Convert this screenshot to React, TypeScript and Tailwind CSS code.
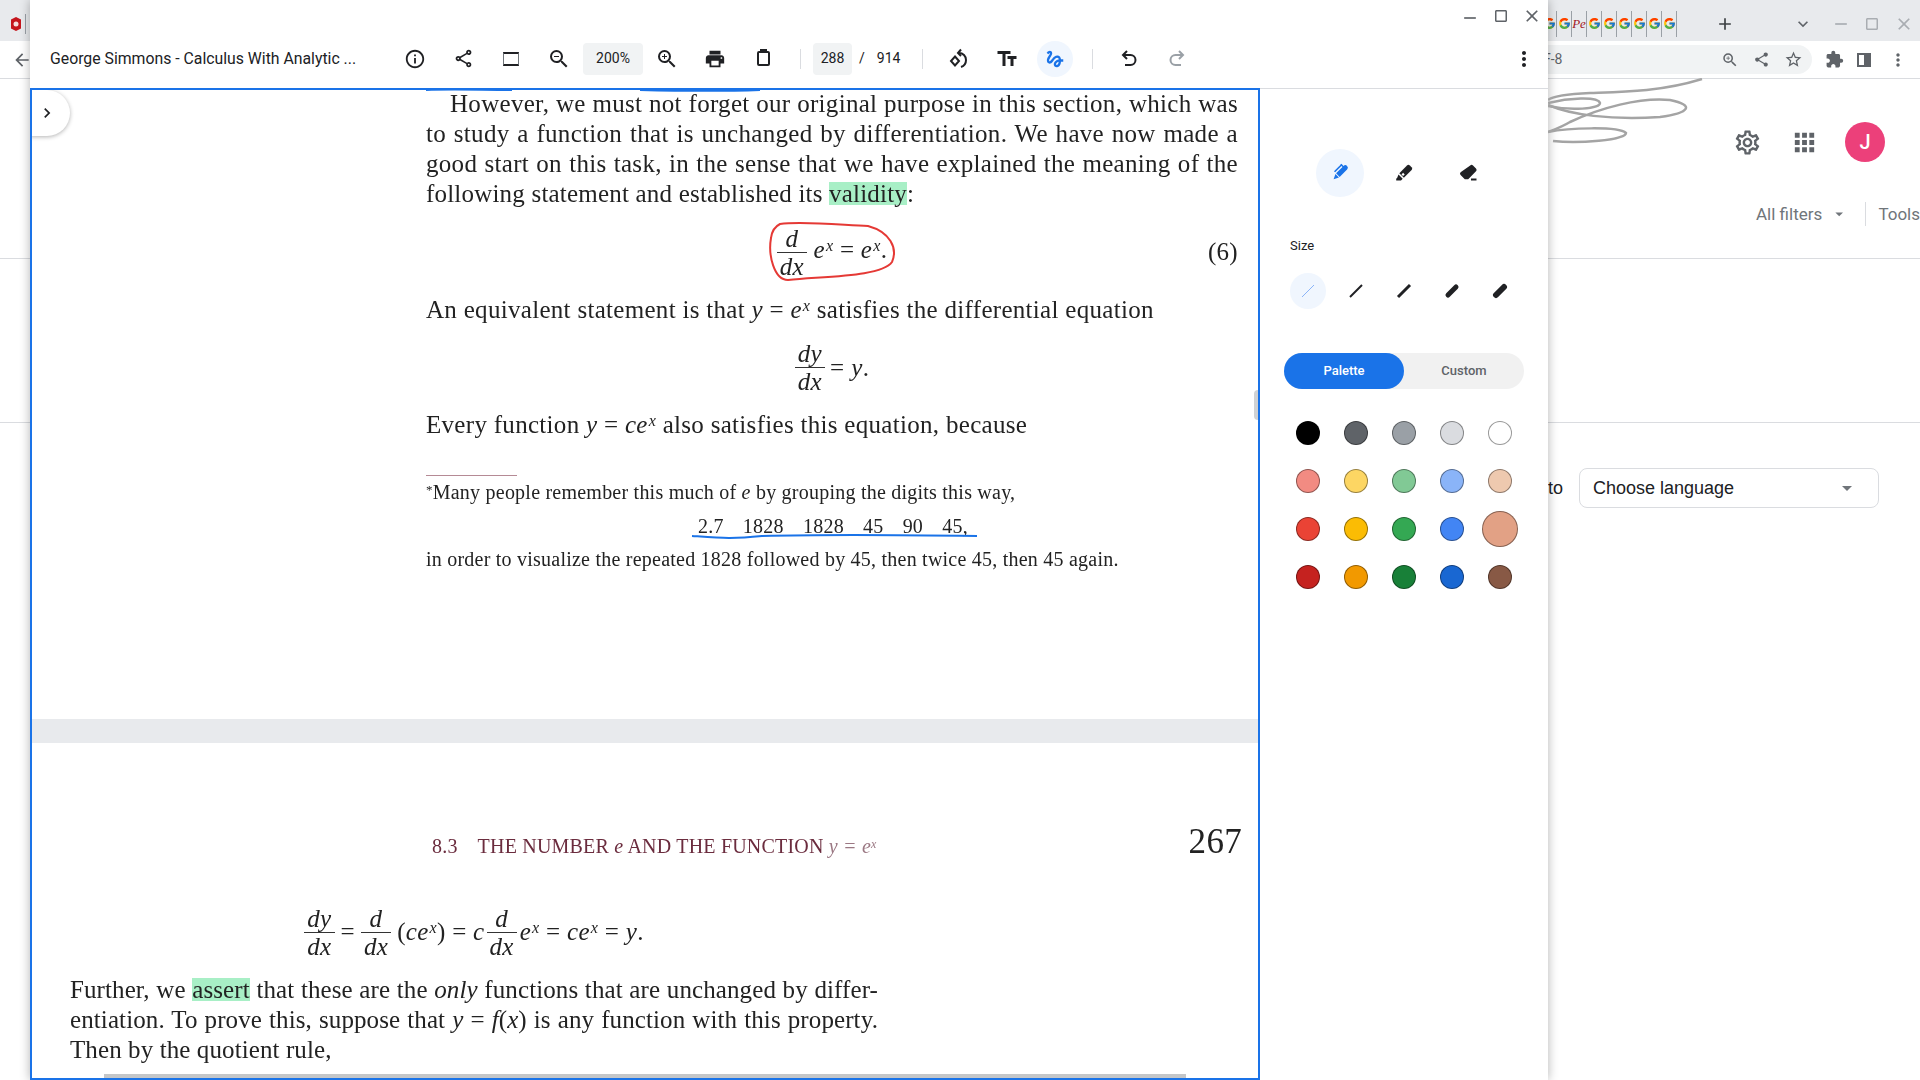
import type { ReactNode } from 'react';
import { FcGoogle } from 'react-icons/fc';
import {
    MdAdd, MdApps, MdArrowBack, MdArrowDropDown, MdChevronRight, MdClose, MdCropSquare, MdExpandMore, MdExtension,
    MdGesture, MdInfoOutline, MdMoreVert, MdOutlineSettings, MdOutlineShare, MdPrint, MdRemove, MdShare,
    MdStarBorder, MdTextFields, MdZoomIn, MdZoomOut,
} from 'react-icons/md';

const palette = [
    '#000000', '#5f6368', '#9aa0a6', '#dadce0', '#ffffff',
    '#f28b82', '#fdd663', '#81c995', '#8ab4f8', '#eec9af',
    '#ea4335', '#fbbc04', '#34a853', '#4285f4', '#e2a185',
    '#c5221f', '#f29900', '#188038', '#1967d2', '#885945',
];
const sizes = [1, 2, 3, 5, 6];

const ToolButton = ({ children, className = '' }: { children: ReactNode; className?: string }) => (
    <div className={`flex h-12 w-12 shrink-0 items-center justify-center ${className}`}>{children}</div>
);

const Divider = () => <div className="h-5 w-px shrink-0 bg-[#dadce0]" />;

// one justified line of the scanned page
const Line = ({ children, className = '' }: { children: ReactNode; className?: string }) => (
    <div className={`[text-align-last:justify] ${className}`}>{children}</div>
);

const Frac = ({ top, bottom }: { top: string; bottom: string }) => (
    <span className="inline-flex flex-col items-center align-middle italic leading-[27px]">
        <span className="w-full border-b border-[#333] px-[3px] text-center">{top}</span>
        <span className="px-[3px]">{bottom}</span>
    </span>
);

const Ex = ({ base = 'e' }: { base?: string }) => (
    <i>{base}<sup className="top-[-7px] ml-[1px] text-[16px] leading-none">x</sup></i>
);

const Mark = ({ children }: { children: ReactNode }) => (
    <span className="inline-block h-[23px] bg-[#a8efc6] leading-[23px]">{children}</span>
);

const RotateIcon = () => (
    <svg width="24" height="24" viewBox="0 0 24 24" fill="none" stroke="#202124" strokeWidth="2">
        <path d="M8 9.500 12 14l-4 4.500L4 14z" />
        <path d="M12 6c4 0 7 3 7 7 0 3-2 6-5 7" />
        <path d="M14 2.500 11 6l3 3" />
    </svg>
);

const UndoIcon = ({ color, flip = false }: { color: string; flip?: boolean }) => (
    <svg width="24" height="24" viewBox="0 0 24 24" fill="none" stroke={color} strokeWidth="2" className={flip ? '-scale-x-100' : ''}>
        <path d="M10 4 6 8l4 4" />
        <path d="M6 8h7.500a5 5 0 0 1 0 10H8" />
    </svg>
);

const PenIcon = () => (
    <svg width="24" height="24" viewBox="0 0 24 24" fill="#1a73e8">
        <g transform="rotate(45 12 12)">
            <path d="M9.500 4.500a2.500 2.500 0 0 1 5 0V15h-5z" />
            <path d="M9.500 16h5L12 21z" />
            <path d="M6.500 5h1.600v10H6.500z" />
            <path d="M6.500 4.500h4V6h-4z" />
        </g>
    </svg>
);

const HighlighterIcon = () => (
    <svg width="24" height="24" viewBox="0 0 24 24" fill="#202124">
        <path d="M15 4.500a2 2 0 0 1 2.800 0l1.800 1.800a2 2 0 0 1 0 2.800l-7.700 7.700-4.600-4.600z" />
        <path d="M6.500 13.500l4.200 4.200-1.700 1.700H4.200v-1.600l1-1z" />
        <path fill="#fff" d="M9.500 13.400l1.600-1.600 1.600 1.600-1.600 1.600z" />
    </svg>
);

const EraserIcon = () => (
    <svg width="24" height="24" viewBox="0 0 24 24" fill="#202124">
        <path d="M14.200 4.500a2 2 0 0 1 2.800 0l3 3a2 2 0 0 1 0 2.800l-7.800 7.900H8.800L4.600 14a2 2 0 0 1 0-2.800z" />
        <path d="M15 17.500h5.500v2H15z" />
    </svg>
);

const App = () => {
    return (
        <div className="relative h-[1080px] w-[1920px] overflow-hidden bg-white font-['Roboto',sans-serif]">
            {/* browser window behind */}
            <div className="flex h-[41px] items-center bg-[#e8eaed] pt-[6px]">
                <svg width="16" height="16" viewBox="0 0 16 16" className="ml-[8px]">
                    <path d="M8 1l5 2.500V12.500L8 15l-5-2.500V3.500z" fill="#c5161d" />
                    <circle cx="8" cy="8" r="2.500" fill="#f5dede" />
                </svg>
                <div className="ml-[1px] h-[20px] w-px bg-[#9aa0a6]" />
                <div className="w-[1516px]" />
                {['g', 'g', 'p', 'g', 'g', 'g', 'g', 'g', 'g'].map((kind, i) => (
                    <div key={i} className="flex h-[26px] w-[15px] shrink-0 items-center justify-center border-r border-[#9aa0a6]">
                        {kind === 'g'
                            ? <FcGoogle className="h-[13px] w-[13px]" />
                            : <span className="font-['Liberation_Serif',serif] text-[13px] italic text-[#a3161d]">Pe</span>}
                    </div>
                ))}
                <MdAdd className="ml-[38px] h-[20px] w-[20px] text-[#3c4043]" />
                <MdExpandMore className="ml-[58px] h-[20px] w-[20px] text-[#5f6368]" />
                <MdRemove className="ml-[18px] h-[20px] w-[20px] text-[#a9adb2]" />
                <MdCropSquare className="ml-[12px] h-[18px] w-[18px] text-[#a9adb2]" />
                <MdClose className="ml-[13px] h-[20px] w-[20px] text-[#a9adb2]" />
            </div>
            <div className="flex h-[38px] items-center border-b border-[#dadce0] bg-white">
                <MdArrowBack className="ml-[12px] h-[20px] w-[20px] text-[#5f6368]" />
                <div className="ml-[1516px] flex h-[29px] w-[264px] items-center rounded-r-full bg-[#f1f3f4] text-[14px] text-[#5f6368]">
                    <span className="ml-[-5px]">F-8</span>
                    <MdZoomIn className="ml-[159px] h-[18px] w-[18px]" />
                    <MdShare className="ml-[14px] h-[17px] w-[17px]" />
                    <MdStarBorder className="ml-[14px] h-[19px] w-[19px]" />
                </div>
                <MdExtension className="ml-[13px] h-[19px] w-[19px] text-[#5f6368]" />
                <div className="ml-[13px] flex h-[14px] w-[14px] justify-end border-2 border-[#5f6368]"><div className="w-[5px] bg-[#5f6368]" /></div>
                <MdMoreVert className="ml-[17px] h-[20px] w-[20px] text-[#5f6368]" />
            </div>

            {/* google page behind the pdf window */}
            <div className="flex h-[120px] items-center justify-end pr-[35px] pt-[6px]">
                <MdOutlineSettings className="h-[29px] w-[29px] text-[#5f6368]" />
                <MdApps className="ml-[28px] h-[29px] w-[29px] text-[#5f6368]" />
                <div className="ml-[26px] flex h-10 w-10 items-center justify-center rounded-full bg-[#ec407a] text-[20px] font-medium text-[#fff]">J</div>
            </div>
            <div className="flex h-[60px] items-start whitespace-nowrap border-b border-[#dadce0] pl-[1756px] pt-px text-[17px] text-[#70757a]">
                <span className="leading-[28px]">All filters</span>
                <MdArrowDropDown className="ml-[8px] mt-[2px] h-[24px] w-[24px]" />
                <div className="ml-[16px] mt-[2px] h-[24px] w-px bg-[#dadce0]" />
                <span className="ml-[13px] leading-[28px]">Tools</span>
            </div>
            <div className="h-[164px] border-b border-[#dadce0]" />
            <div className="flex items-center pl-[1548px] pt-[45px] font-['Liberation_Sans',sans-serif] text-[#202124]">
                <span className="text-[18px]">to</span>
                <div className="ml-[16px] flex h-[40px] w-[300px] items-center justify-between rounded-lg border border-[#dadce0] pl-[13px] pr-[19px] text-[18px]">
                    Choose language
                    <MdArrowDropDown className="h-[24px] w-[24px] text-[#70757a]" />
                </div>
            </div>

            {/* pdf window */}
            <div className="absolute left-[30px] top-0 flex h-[1080px] w-[1518px] flex-col bg-white text-[#202124] shadow-[0_0_10px_rgba(0,0,0,0.3)]">
                <div className="flex h-[29px] items-center justify-end gap-[12px] pr-[6px] pt-[2px] text-[#5f6368]">
                    <MdRemove className="mt-[4px] h-[20px] w-[20px]" />
                    <MdCropSquare className="h-[18px] w-[18px]" />
                    <MdClose className="h-[20px] w-[20px]" />
                </div>
                <div className="flex h-[59px] items-center">
                    <div className="w-[361px] shrink-0 pl-[20px] text-[15.8px] leading-none">George Simmons - Calculus With Analytic ...</div>
                    <ToolButton><MdInfoOutline size={22} /></ToolButton>
                    <ToolButton><MdOutlineShare size={21} /></ToolButton>
                    <ToolButton>
                        <div className="h-[14px] w-[16px] border-x border-y-2 border-x-[#70757a] border-y-[#202124]" />
                    </ToolButton>
                    <ToolButton><MdZoomOut size={24} /></ToolButton>
                    <div className="flex h-8 w-[60px] shrink-0 items-center justify-center rounded bg-[#f1f3f4] text-[14px]">200%</div>
                    <ToolButton><MdZoomIn size={24} /></ToolButton>
                    <ToolButton><MdPrint size={22} /></ToolButton>
                    <ToolButton>
                        <div className="relative h-[15px] w-[13px] rounded-[2px] border-2 border-[#202124] before:absolute before:left-[1px] before:top-[-4px] before:h-[2px] before:w-[7px] before:bg-[#202124]" />
                    </ToolButton>
                    <div className="ml-[13px]"><Divider /></div>
                    <div className="ml-[12px] flex h-8 w-[39px] shrink-0 items-center justify-center rounded bg-[#f1f3f4] text-[14px]">288</div>
                    <span className="ml-[7px] text-[14px]">/</span>
                    <span className="ml-[12px] text-[14px]">914</span>
                    <div className="ml-[22px]"><Divider /></div>
                    <ToolButton className="ml-[12px]"><RotateIcon /></ToolButton>
                    <ToolButton><MdTextFields size={24} /></ToolButton>
                    <ToolButton>
                        <div className="flex h-9 w-9 items-center justify-center rounded-full bg-[#f0f6fe] text-[#1a73e8]"><MdGesture size={22} /></div>
                    </ToolButton>
                    <div className="ml-[13px]"><Divider /></div>
                    <ToolButton className="ml-[12px]"><UndoIcon color="#202124" /></ToolButton>
                    <ToolButton><UndoIcon color="#9aa0a6" flip /></ToolButton>
                    <ToolButton className="ml-auto"><MdMoreVert size={24} /></ToolButton>
                </div>

                <div className="flex min-h-0 flex-1">
                    {/* document */}
                    <div className="relative w-[1230px] shrink-0 overflow-hidden border-2 border-[#1a73e8] bg-white font-['Liberation_Serif',serif] text-[25px] leading-[30px] tracking-[0.3px] text-[#222]">
                        <div className="blur-[0.35px]">
                            <div className="flow-root h-[629px] pl-[394px] pr-[20px]">
                                <div className="mt-[-1px]">
                                    <Line className="pl-[24px]">However, we must not forget our original purpose in this section, which was</Line>
                                    <Line>to study a function that is unchanged by differentiation. We have now made a</Line>
                                    <Line>good start on this task, in the sense that we have explained the meaning of the</Line>
                                    <div className="tracking-[0.2px]">following statement and established its <Mark>validity</Mark>:</div>
                                </div>
                                <div className="grid h-[86px] grid-cols-[1fr_auto_1fr] items-center">
                                    <div />
                                    <div className="whitespace-nowrap"><Frac top="d" bottom="dx" /> <Ex /> = <Ex />.</div>
                                    <div className="text-right">(6)</div>
                                </div>
                                <div>An equivalent statement is that <i>y</i> = <Ex /> satisfies the differential equation</div>
                                <div className="flex h-[85px] items-center justify-center whitespace-nowrap">
                                    <Frac top="dy" bottom="dx" /><span className="ml-[5px]">=</span><i className="ml-[7px]">y</i>.
                                </div>
                                <div>Every function <i>y</i> = <Ex base="ce" /> also satisfies this equation, because</div>
                                <div className="mt-[35px] h-px w-[91px] bg-[#b58a95]" />
                                <div className="text-[20px] leading-[33.500px] tracking-[0.23px]">
                                    <div><sup className="top-[-5px] text-[13px] leading-none">*</sup>Many people remember this much of <i>e</i> by grouping the digits this way,</div>
                                    <div className="ml-[272px] flex w-[270px] justify-between">
                                        <span>2.7</span><span>1828</span><span>1828</span><span>45</span><span>90</span><span>45,</span>
                                    </div>
                                    <div>in order to visualize the repeated 1828 followed by 45, then twice 45, then 45 again.</div>
                                </div>
                            </div>
                            <div className="h-[24px] bg-[#e8eaed]" />
                            <div className="pl-[38px]">
                                <div className="flex w-[1172px] items-baseline pl-[362px] pt-[79px] text-[#6b2c3e]">
                                    <span className="text-[20px] tracking-[0.2px]">8.3</span>
                                    <span className="ml-[20px] text-[20px] tracking-[0.2px]">THE NUMBER <i>e</i> AND THE FUNCTION <i className="text-[#9b7883]">y = e<sup className="top-[-5px] text-[12px] leading-none">x</sup></i></span>
                                    <span className="ml-auto text-[35px] leading-[40px] text-[#222]">267</span>
                                </div>
                                <div className="mt-[24px] flex h-[80px] w-[808px] items-center justify-center whitespace-nowrap pt-[12px]">
                                    <Frac top="dy" bottom="dx" /><span className="mx-[6px]">=</span><Frac top="d" bottom="dx" />
                                    <span className="ml-[6px]">(<Ex base="ce" />) = <i>c</i></span>
                                    <span className="ml-[2px]"><Frac top="d" bottom="dx" /></span><span className="ml-[3px]"><Ex /> = <Ex base="ce" /> = <i>y</i>.</span>
                                </div>
                                <div className="w-[808px] pt-[9px] tracking-[0.1px]">
                                    <Line>Further, we <Mark>assert</Mark> that these are the <i>only</i> functions that are unchanged by differ-</Line>
                                    <Line>entiation. To prove this, suppose that <i>y</i> = <i>f</i>(<i>x</i>) is any function with this property.</Line>
                                    <div>Then by the quotient rule,</div>
                                </div>
                            </div>
                        </div>

                        {/* pen strokes drawn over the page */}
                        <svg className="absolute left-0 top-0" width="1226" height="640" fill="none">
                            <path d="M394 0C420 -1 450 0 480 0M608 0C650 1 700 1 728 0" stroke="#1a73e8" strokeWidth="2" />
                            <path d="M748 134C770 131 810 135 836 136C858 142 866 158 860 172C850 186 800 186 756 190C742 190 736 165 739 148C740 140 744 136 748 134Z" stroke="#e53935" strokeWidth="2" />
                            <path d="M660 446C690 448 700 449 730 446C800 444 880 445 945 446" stroke="#1a73e8" strokeWidth="2" />
                        </svg>
                        <div className="absolute bottom-0 left-[72px] right-[72px] h-[4px] bg-[#c4c6c8]" />
                        <div className="absolute right-0 top-[300px] h-[30px] w-[4px] rounded-l bg-[#d0d2d4]" />
                        <div className="absolute left-[-2px] top-0 flex h-[46px] w-[40px] items-center justify-center rounded-r-full bg-white pr-[6px] shadow-[0_1px_4px_rgba(0,0,0,0.3)]">
                            <MdChevronRight size={20} className="text-[#202124]" />
                        </div>
                    </div>

                    {/* annotation panel */}
                    <div className="flex-1 border-t border-[#dadce0] px-6 pt-[60px]">
                        <div className="flex justify-center gap-4">
                            <div className="flex h-12 w-12 items-center justify-center rounded-full bg-[#f0f6fe]"><PenIcon /></div>
                            <div className="flex h-12 w-12 items-center justify-center"><HighlighterIcon /></div>
                            <div className="flex h-12 w-12 items-center justify-center"><EraserIcon /></div>
                        </div>
                        <div className="ml-[6px] mt-[41px] text-[13px] leading-4 text-[#202124]">Size</div>
                        <div className="mt-[13px] grid grid-cols-5">
                            {sizes.map((size, i) => (
                                <div key={size} className="flex h-12 items-center justify-center">
                                    <div className={`flex h-9 w-9 items-center justify-center rounded-full ${i === 0 ? 'bg-[#f0f6fe]' : ''}`}>
                                        <svg width="16" height="16" viewBox="0 0 16 16">
                                            {size > 3
                                                ? <line x1="4" y1="12" x2="12" y2="4" stroke="#202124" strokeWidth={size} strokeLinecap="round" />
                                                : <line x1="2" y1="14" x2="14" y2="2" stroke={i === 0 ? '#8ab4f8' : '#202124'} strokeWidth={size} />}
                                        </svg>
                                    </div>
                                </div>
                            ))}
                        </div>
                        <div className="mt-[38px] flex h-9 rounded-full bg-[#f1f1f1] text-[13px] font-medium">
                            <div className="flex w-[120px] items-center justify-center rounded-full bg-[#1a73e8] text-white">Palette</div>
                            <div className="flex w-[120px] items-center justify-center text-[#5f6368]">Custom</div>
                        </div>
                        <div className="mt-[20px] grid grid-cols-5">
                            {palette.map((color, i) => (
                                <div key={color} className="flex h-12 items-center justify-center">
                                    <div
                                        className={`rounded-full border border-black/40 ${i === 14 ? 'h-9 w-9' : 'h-6 w-6'}`}
                                        style={{ backgroundColor: color }}
                                    />
                                </div>
                            ))}
                        </div>
                    </div>
                </div>
            </div>

            {/* ink scribble left on the page behind */}
            <svg className="absolute left-[1548px] top-[78px]" width="160" height="70" fill="none" stroke="#a4a4a4" strokeWidth="2.500">
                <path d="M154 1C112 14 72 14 42 15C22 16 4 18 0 22" />
                <path d="M0 25C20 20 50 18 52 25C52 31 22 33 0 28" />
                <path d="M0 27C22 37 62 42 112 39C142 35 147 27 122 22C92 19 52 30 22 44C12 50 2 53 0 54" />
                <path d="M0 54C20 50 70 48 78 55C78 62 30 66 5 63" />
            </svg>
        </div>
    );
};

export default App;
